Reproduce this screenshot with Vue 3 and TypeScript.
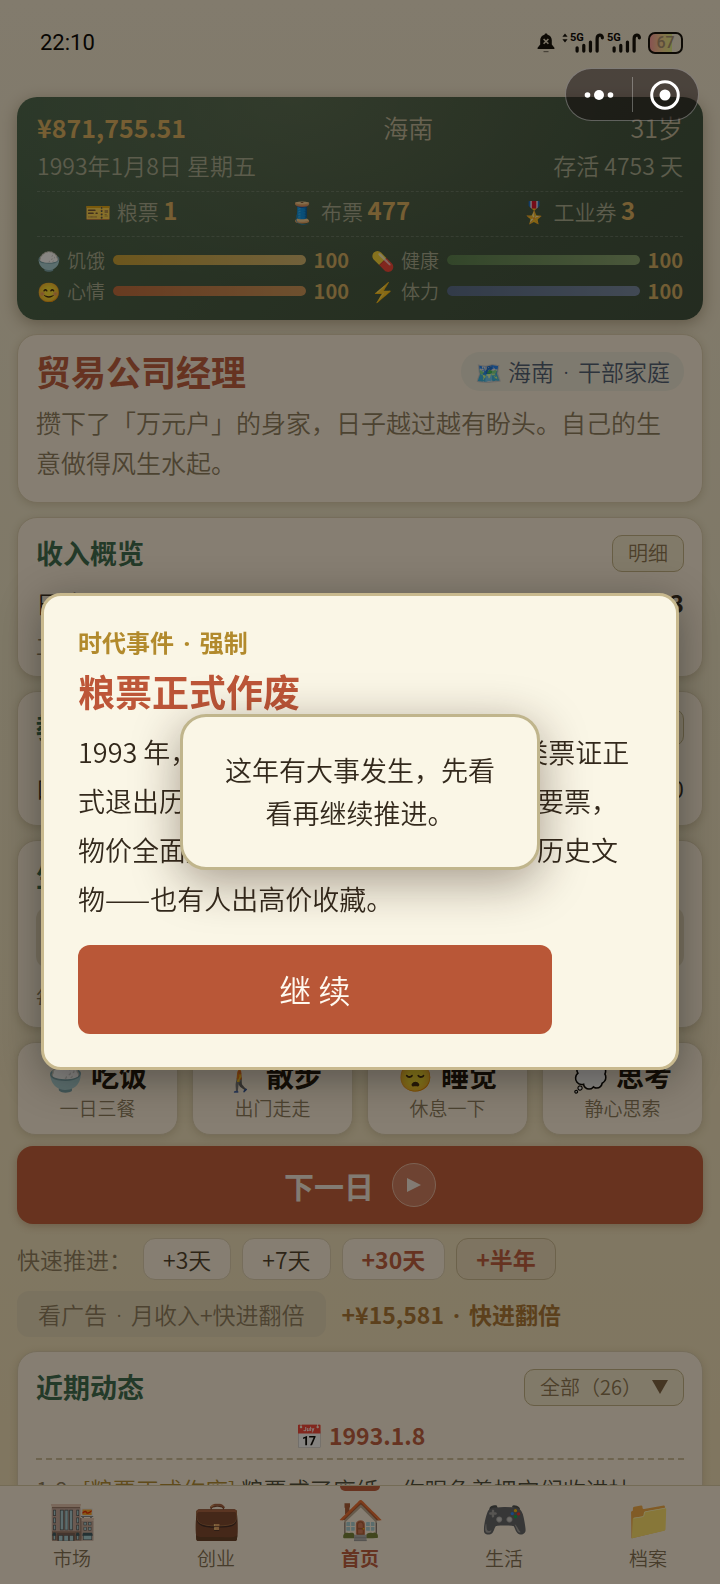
<script setup lang="ts">
import { ref } from 'vue'

interface Ticket { icon: string; name: string; count: number }
interface Stat { icon: string; name: string; value: number; tone: string }
interface Action { icon: string; name: string; hint: string }
interface Step { label: string; kind: string }
interface Tab { icon: string; name: string }

const tickets: Ticket[] = [
  { icon: '🎫', name: '粮票', count: 1 },
  { icon: '🧵', name: '布票', count: 477 },
  { icon: '🎖️', name: '工业券', count: 3 },
]

const stats: Stat[] = [
  { icon: '🍚', name: '饥饿', value: 100, tone: 'gold' },
  { icon: '💊', name: '健康', value: 100, tone: 'green' },
  { icon: '😊', name: '心情', value: 100, tone: 'orange' },
  { icon: '⚡', name: '体力', value: 100, tone: 'blue' },
]

const actions: Action[] = [
  { icon: '🍚', name: '吃饭', hint: '一日三餐' },
  { icon: '🚶', name: '散步', hint: '出门走走' },
  { icon: '😴', name: '睡觉', hint: '休息一下' },
  { icon: '💭', name: '思考', hint: '静心思索' },
]

const steps: Step[] = [
  { label: '+3天', kind: '' },
  { label: '+7天', kind: '' },
  { label: '+30天', kind: 'strong' },
  { label: '+半年', kind: 'strong tinted' },
]

const tabs: Tab[] = [
  { icon: '🏬', name: '市场' },
  { icon: '💼', name: '创业' },
  { icon: '🏠', name: '首页' },
  { icon: '🎮', name: '生活' },
  { icon: '📁', name: '档案' },
]

const activeTab = ref('首页')
const eventOpen = ref(true)
</script>

<template>
  <div class="app">
    <header class="status">
      <span class="clock">22:10</span>
      <span class="signals">
        <svg class="bell" viewBox="0 0 18 20" aria-hidden="true">
          <path d="M9 0.5c.9 0 1.4.5 1.5 1.2 2.800.7 4.300 2.900 4.300 5.600v4.200l2.600 3.200v1.300H.6v-1.300l2.600-3.200V7.300c0-2.700 1.500-4.900 4.300-5.600C7.600 1 8.100.5 9 .5z" fill="#0b0905" />
          <path d="M6.600 6l4.800 4.800M11.400 6l-4.800 4.800" stroke="#e6dcc4" stroke-width="1.600" />
          <path d="M6.500 18.600h5" stroke="#0b0905" stroke-width="1.200" opacity=".5" />
        </svg>
        <span v-for="n in 2" :key="n" class="cell">
          <svg v-if="n === 1" class="arrows" viewBox="0 0 6 10" aria-hidden="true">
            <path d="M3 0.500l2.600 3.300H.4zM3 9.500L.4 6.200h5.200z" fill="#0b0905" />
          </svg>
          <span class="gen">5G</span>
          <svg class="bars" viewBox="0 0 30 21" aria-hidden="true">
            <path d="M2 19v-3.500M9 19v-6M16 19v-9.500M23 19V6c0-5 5.500-5 5.500-1" fill="none" stroke="#0b0905" stroke-width="3.400" stroke-linecap="round" />
          </svg>
        </span>
        <span class="battery"><span class="charge">67</span></span>
      </span>
    </header>

    <main class="content">
      <section class="hero">
        <div class="line lead">
          <strong class="money">¥871,755.51</strong>
          <span>海南</span>
          <span>31岁</span>
        </div>
        <div class="line date">
          <span>1993年1月8日 星期五</span>
          <span>存活 4753 天</span>
        </div>
        <ul class="tickets">
          <li v-for="t in tickets" :key="t.name">
            <span class="emoji">{{ t.icon }}</span>
            <span>{{ t.name }} <b>{{ t.count }}</b></span>
          </li>
        </ul>
        <ul class="stats">
          <li v-for="s in stats" :key="s.name">
            <span class="emoji">{{ s.icon }}</span>
            <span>{{ s.name }}</span>
            <span class="track"><span class="fill" :class="s.tone" :style="{ width: s.value + '%' }"></span></span>
            <b>{{ s.value }}</b>
          </li>
        </ul>
      </section>

      <section class="card">
        <div class="head">
          <h1>贸易公司经理</h1>
          <span class="origin"><span class="emoji">🗺️</span><span>海南 <i class="dot">·</i> 干部家庭</span></span>
        </div>
        <p class="story">攒下了「万元户」的身家，日子越过越有盼头。自己的生意做得风生水起。</p>
      </section>

      <section class="card">
        <div class="head">
          <h2>收入概览</h2>
          <button type="button" class="small">明细</button>
        </div>
        <div class="row income"><span>日收入</span><b>+¥519.33</b></div>
        <div class="row muted"><span>工资</span></div>
      </section>

      <section class="card">
        <div class="head">
          <h2>教育概览</h2>
          <button type="button" class="small">明细</button>
        </div>
        <div class="row study"><span>口才</span><span>100</span></div>
      </section>

      <section class="card">
        <div class="head">
          <h2>生活</h2>
        </div>
        <button type="button" class="wide" aria-label="今日安排"></button>
        <div class="row muted"><span>每日</span></div>
      </section>

      <div class="actions">
        <button v-for="a in actions" :key="a.name" type="button" class="action">
          <span class="name"><span class="emoji">{{ a.icon }}</span>{{ a.name }}</span>
          <span class="hint">{{ a.hint }}</span>
        </button>
      </div>

      <button type="button" class="next">
        下一日
        <span class="play">
          <svg viewBox="0 0 14 14" aria-hidden="true"><path d="M0 0l14 7-14 7z" fill="#f5ebe0" /></svg>
        </span>
      </button>

      <div class="quick">
        <span>快速推进：</span>
        <button v-for="s in steps" :key="s.label" type="button" :class="s.kind">{{ s.label }}</button>
      </div>

      <div class="boost">
        <button type="button">看广告 <i class="dot">·</i> 月收入+快进翻倍</button>
        <strong>+¥15,581 <i class="dot">·</i> 快进翻倍</strong>
      </div>

      <section class="card recent">
        <div class="head">
          <h2>近期动态</h2>
          <button type="button" class="small">全部（26）
            <svg viewBox="0 0 16 14" aria-hidden="true"><path d="M0 0h16L8 14z" fill="#7a6040" /></svg>
          </button>
        </div>
        <div class="day"><span class="emoji">📅</span> 1993.1.8</div>
        <p class="news"><span class="when">1.8</span><em>[粮票正式作废]</em> 粮票成了废纸，你眼角着把它们收进抽</p>
      </section>
    </main>

    <nav class="tabs">
      <a v-for="t in tabs" :key="t.name" href="#" :class="{ active: t.name === activeTab }" @click.prevent="activeTab = t.name">
        <span class="icon">{{ t.icon }}</span>
        <span>{{ t.name }}</span>
      </a>
    </nav>

    <div v-if="eventOpen" class="scrim">
      <div class="dialog" role="dialog" aria-labelledby="event-title">
        <div class="kind">时代事件 <i class="dot">·</i> 强制</div>
        <h2 id="event-title">粮票正式作废</h2>
        <p>1993 年，国家宣布粮票布票油票等各类票证正式退出历史舞台。从此买粮买布都不再要票，物价全面放开。你手里的旧粮票变成了历史文物——也有人出高价收藏。</p>
        <button type="button" @click="eventOpen = false">继 续</button>
      </div>
    </div>

    <div class="toast-layer">
      <div class="toast" role="status">这年有大事发生，先看看再继续推进。</div>
    </div>

    <div class="capsule">
      <button type="button" aria-label="更多">
        <svg viewBox="0 0 30 12" width="30" height="12"><g fill="#fff"><circle cx="3.500" cy="6" r="2.800" /><circle cx="15" cy="6" r="5" /><circle cx="26.500" cy="6" r="2.800" /></g></svg>
      </button>
      <button type="button" aria-label="关闭">
        <svg viewBox="0 0 30 30" width="30" height="30"><circle cx="15" cy="15" r="13.300" fill="none" stroke="#fff" stroke-width="3" /><circle cx="15" cy="15" r="5.500" fill="#fff" /></svg>
      </button>
    </div>
  </div>
</template>

<style>
body {
  margin: 0;
}
</style>

<style scoped>
* {
  box-sizing: border-box;
}
.app {
  position: relative;
  display: flex;
  flex-direction: column;
  height: 100vh;
  overflow: hidden;
  background: linear-gradient(#f4ead4 0%, #efe6c9 40%, #f1e0b8 100%);
  color: #33291c;
  font: 350 24px/32px "Noto Sans CJK SC", "Noto Sans", sans-serif;
}
button {
  margin: 0;
  padding: 0;
  border: 0;
  background: none;
  color: inherit;
  font: inherit;
  cursor: pointer;
}
h1, h2, p, ul {
  margin: 0;
  padding: 0;
}
ul {
  list-style: none;
}
.dot {
  margin: 0 4px;
  font-family: "Noto Sans", sans-serif;
  font-style: normal;
}

/* status bar */
.status {
  flex: none;
  display: flex;
  justify-content: space-between;
  align-items: center;
  height: 97px;
  padding: 0 37px 11px 40px;
  color: #000;
}
.clock {
  font: 400 22px/30px Roboto, sans-serif;
}
.signals {
  display: flex;
  align-items: center;
}
.bell {
  width: 18px;
  height: 20px;
  margin-right: 7px;
}
.cell {
  display: flex;
  align-items: flex-start;
  height: 21px;
}
.arrows {
  width: 6px;
  height: 10px;
  margin-right: 2px;
}
.gen {
  width: 13px;
  margin-right: -8px;
  font: 700 11px/10px Roboto, sans-serif;
}
.bars {
  width: 29px;
  height: 20px;
  margin-right: 3px;
}
.battery {
  width: 35px;
  height: 22px;
  margin-left: 4px;
  border: 2px solid #0b0905;
  border-radius: 7px;
  background: linear-gradient(90deg, #ff9c9c, #f8d790 40%, #e2ef86 70%, transparent 70%);
}
.charge {
  display: block;
  color: #a89070;
  font: 500 16px/18px Roboto, sans-serif;
  text-align: center;
}

/* page */
.content {
  flex: 1;
  display: flex;
  flex-direction: column;
  gap: 14px;
  min-height: 0;
  padding: 0 17px;
}
.content > * {
  flex: none;
}
.hero {
  padding: 14px 20px;
  border-radius: 20px;
  background:
    radial-gradient(ellipse at 40% 0%, rgba(255, 240, 200, .1), transparent 60%),
    linear-gradient(135deg, #44624a, #3f5640 50%, #384c3b);
  box-shadow: 0 4px 16px rgba(60, 40, 10, .35);
  color: #a8ac92;
}
.line {
  display: flex;
  justify-content: space-between;
  align-items: center;
}
.lead {
  color: #c0b89c;
  font-size: 25px;
}
.money {
  color: #dcb060;
}
.date {
  height: 48px;
  padding-bottom: 4px;
  font-size: 23px;
}
.tickets {
  display: flex;
  justify-content: space-around;
  gap: 16px;
  padding: 2px 0 9px;
  border: dashed rgba(255, 255, 255, .16);
  border-width: 1px 0;
  font-size: 21px;
}
.tickets li {
  display: flex;
  align-items: center;
  gap: 6px;
}
.tickets .emoji {
  font-size: 21px;
}
.tickets b {
  color: #dcb060;
  font-size: 24px;
}
.stats {
  display: grid;
  grid-template-columns: 1fr 1fr;
  gap: 0 22px;
  padding-top: 7px;
  font-size: 19px;
  line-height: 31px;
}
.stats li {
  display: flex;
  align-items: center;
  gap: 8px;
}
.stats .emoji {
  width: 22px;
}
.stats b {
  color: #d4ae62;
  font-size: 20px;
}
.track {
  flex: 1;
  height: 10px;
  border-radius: 5px;
  background: rgba(0, 0, 0, .25);
}
.fill {
  display: block;
  height: 100%;
  border-radius: 5px;
}
.gold { background: linear-gradient(90deg, #c8a034, #d2b670); }
.green { background: linear-gradient(90deg, #56804e, #86a470); }
.orange { background: linear-gradient(90deg, #c06a3c, #cc9558); }
.blue { background: linear-gradient(90deg, #546a8c, #7488a4); }

.card {
  padding: 16px 18px;
  border: 1px solid #dccfb0;
  border-radius: 20px;
  background: #fcf1de;
  box-shadow: 0 2px 8px rgba(100, 80, 30, .2);
}
.head {
  display: flex;
  justify-content: space-between;
  align-items: center;
  min-height: 38px;
}
h1 {
  color: #bd5a3c;
  font-size: 35px;
  line-height: 40px;
}
.card h2 {
  color: #37694c;
  font-size: 27px;
  line-height: 38px;
}
.origin {
  display: flex;
  align-items: center;
  gap: 6px;
  padding: 3px 14px;
  border-radius: 19px;
  background: #ece8d8;
  color: #4a5a72;
  font-size: 23px;
}
.origin .emoji {
  font-size: 22px;
}
.story {
  margin-top: 11px;
  padding-bottom: 4px;
  color: #8a7a5c;
  font-size: 25px;
  line-height: 40px;
}
.small {
  display: flex;
  align-items: center;
  gap: 10px;
  height: 37px;
  padding: 0 15px;
  border: 1px solid #c0b084;
  border-radius: 10px;
  background: #f3e8cc;
  color: #8a7450;
  font-size: 20px;
}
.small svg {
  width: 16px;
  height: 14px;
}
.row {
  display: flex;
  justify-content: space-between;
  height: 39px;
  padding-top: 8px;
}
.income {
  height: 42px;
  margin-top: 7px;
}
.study {
  height: 63px;
  padding-top: 26px;
}
.muted {
  color: #8a7a5c;
  font-size: 21px;
}
.wide {
  display: block;
  width: 100%;
  height: 61px;
  margin: 12px 0 4px;
  border-radius: 12px;
  background: #e6d8bc;
}

/* actions */
.actions {
  display: grid;
  grid-template-columns: repeat(4, 1fr);
  gap: 14px;
}
.action {
  display: flex;
  flex-direction: column;
  align-items: center;
  gap: 1px;
  padding: 16px 0 10px;
  border: 1px solid #dccfb0;
  border-radius: 18px;
  background: #fcf1de;
  box-shadow: 0 2px 8px rgba(100, 80, 30, .2);
}
.name {
  display: flex;
  gap: 8px;
  color: #1a1208;
  font-size: 28px;
  font-weight: 700;
}
.hint {
  color: #8a7a5c;
  font-size: 19px;
}
.next {
  display: flex;
  justify-content: center;
  align-items: center;
  gap: 18px;
  height: 78px;
  margin-top: -3px;
  border-radius: 16px;
  background: #c05a38;
  box-shadow: 0 2px 8px rgba(120, 60, 20, .3);
  color: #f5ebe0;
  font-size: 30px;
  font-weight: 700;
}
.play {
  display: flex;
  justify-content: center;
  align-items: center;
  width: 44px;
  height: 44px;
  border: 1px solid #e8b8a0;
  border-radius: 50%;
  background: rgba(255, 255, 255, .2);
}
.play svg {
  width: 14px;
  height: 14px;
}
.quick {
  display: flex;
  align-items: center;
  gap: 11px;
  color: #8a7a5c;
  font-size: 23px;
}
.quick button {
  height: 42px;
  padding: 0 19px;
  border: 1px solid #dccfb0;
  border-radius: 12px;
  background: #fcf1de;
  color: #4a3c28;
}
.quick .strong {
  color: #bd5a3c;
  font-weight: 700;
}
.quick .tinted {
  border-color: #c8b890;
  background: #eddcbc;
}
.boost {
  display: flex;
  align-items: center;
  gap: 16px;
  margin-top: -3px;
  color: #a87432;
  font-size: 23px;
}
.boost button {
  height: 46px;
  padding: 0 21px;
  border-radius: 12px;
  background: #e4d8b8;
  color: #8a7a5c;
}
.day {
  padding: 13px 0 7px;
  border-bottom: 2px dashed #cdbd98;
  color: #bd5a3c;
  font-size: 23px;
  font-weight: 700;
  text-align: center;
}
.news {
  margin-top: 11px;
  color: #4a4a38;
  font-size: 23px;
  line-height: 36px;
  white-space: nowrap;
  overflow: hidden;
}
.when {
  margin-right: 15px;
  color: #8a7a5c;
}
.news em {
  color: #b08a30;
  font-style: normal;
}

/* tab bar */
.tabs {
  position: relative;
  flex: none;
  display: grid;
  grid-template-columns: repeat(5, 1fr);
  border-top: 1px solid #d8caa4;
  background: #fcf1de;
}
.tabs a {
  position: relative;
  display: flex;
  flex-direction: column;
  align-items: center;
  gap: 4px;
  padding: 8px 0 12px;
  color: #7c6c50;
  font-size: 19px;
  line-height: 28px;
  text-decoration: none;
}
.icon {
  font-size: 38px;
  line-height: 46px;
}
.tabs .active {
  color: #bd5a3c;
  font-weight: 700;
}
.tabs .active::before {
  content: "";
  position: absolute;
  top: 0;
  width: 40px;
  height: 5px;
  border-radius: 0 0 5px 5px;
  background: #c05a38;
}

/* overlays */
.scrim {
  position: fixed;
  inset: 0;
  display: flex;
  align-items: center;
  padding: 78px 41px 0;
  background: rgba(16, 12, 6, .5);
}
.dialog {
  width: 100%;
  padding: 30px 34px 33px;
  border: 3px solid #c8b98e;
  border-radius: 20px;
  background: #faf6e6;
  box-shadow: 0 8px 40px rgba(0, 0, 0, .35);
}
.kind {
  color: #b28a2c;
  font-size: 24px;
  font-weight: 700;
}
.dialog h2 {
  margin-top: 8px;
  color: #bd5638;
  font-size: 37px;
  line-height: 48px;
}
.dialog p {
  margin: 12px 0 22px;
  padding-right: 4px;
  font-size: 27px;
  line-height: 49px;
}
.dialog button {
  display: block;
  width: 84%;
  height: 89px;
  border-radius: 12px;
  background: #b95737;
  color: #fffaf0;
  font-size: 32px;
}
.toast-layer {
  position: fixed;
  inset: 0;
  display: flex;
  justify-content: center;
  align-items: center;
  pointer-events: none;
}
.toast {
  width: 50%;
  padding: 31px 36px 33px;
  border: 3px solid #c0b58c;
  border-radius: 26px;
  background: #faf6e6;
  box-shadow: 0 12px 48px rgba(40, 20, 10, .4);
  font-size: 27px;
  line-height: 43px;
  text-align: center;
}
.capsule {
  position: fixed;
  top: 68px;
  right: 21px;
  display: grid;
  grid-template-columns: 1fr 1fr;
  width: 134px;
  height: 53px;
  border: 1px solid rgba(255, 255, 255, .3);
  border-radius: 27px;
  background: rgba(20, 12, 14, .5);
}
.capsule button {
  display: flex;
  justify-content: center;
  align-items: center;
}
.capsule button + button {
  position: relative;
}
.capsule button + button::before {
  content: "";
  position: absolute;
  left: 0;
  top: 8px;
  bottom: 8px;
  width: 1px;
  background: rgba(255, 255, 255, .3);
}
</style>
